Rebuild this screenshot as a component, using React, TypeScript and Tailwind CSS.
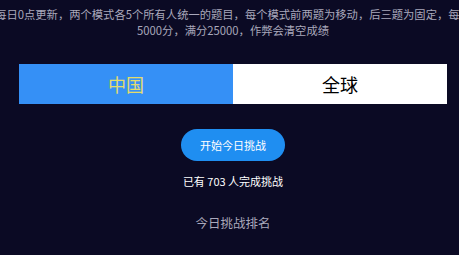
import { useState } from 'react';

const FONT = { fontFamily: '"Noto Sans CJK SC", "Noto Sans", sans-serif' };

export default function App() {
  const [tab, setTab] = useState<'cn' | 'global'>('cn');

  return (
    <div className="w-screen h-screen overflow-hidden bg-[#0b0a24]" style={FONT}>
      <div className="w-[466px] flex flex-col items-center">
        <p className="w-[480px] shrink-0 pt-[6px] text-center text-[11.3px] leading-[16px] text-[#a9a8bb]">
          每日0点更新，两个模式各5个所有人统一的题目，每个模式前两题为移动，后三题为固定，每题5000分，满分25000，作弊会清空成绩
        </p>

        {/* region tabs */}
        <div className="mt-[26px] w-[428px] h-[40px] flex">
          <button
            onClick={() => setTab('cn')}
            className={`flex-1 flex items-center justify-center text-[18px] ${
              tab === 'cn' ? 'bg-[#3590f6] text-[#e3dc6c]' : 'bg-white text-black'
            }`}
          >
            中国
          </button>
          <button
            onClick={() => setTab('global')}
            className={`flex-1 flex items-center justify-center text-[18px] ${
              tab === 'global' ? 'bg-[#3590f6] text-[#e3dc6c]' : 'bg-white text-black'
            }`}
          >
            全球
          </button>
        </div>

        <button className="mt-[25px] w-[104px] h-[32px] rounded-full bg-[#1f8ef1] text-white text-[11px]">
          开始今日挑战
        </button>

        <p className="mt-[12px] text-[11px] leading-[16px] text-white">已有 703 人完成挑战</p>

        <p className="mt-[25px] text-[12.5px] leading-[18px] text-[#a9a8bb]">今日挑战排名</p>
      </div>
    </div>
  );
}
